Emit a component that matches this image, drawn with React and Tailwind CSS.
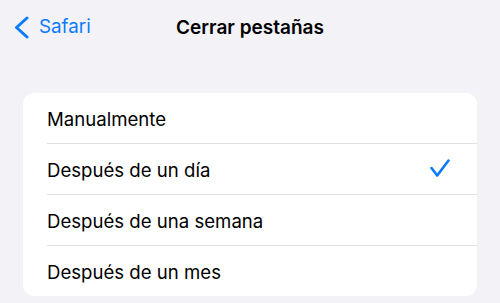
import React from "react";

const options = [
  { label: "Manualmente", checked: false },
  { label: "Después de un día", checked: true },
  { label: "Después de una semana", checked: false },
  { label: "Después de un mes", checked: false },
];

const Check = () => (
  <svg width="20" height="19" viewBox="0 0 20 19" fill="none">
    <path
      d="M1.5 9 L7.2 16.5 L18.5 1.5"
      stroke="#0a7aff"
      strokeWidth="2.6"
      strokeLinecap="round"
      strokeLinejoin="round"
    />
  </svg>
);

const App = () => {
  return (
    <div className="w-[500px] h-[303px] bg-[#f2f2f7] overflow-hidden font-['Inter',sans-serif] text-black">
      <div className="h-[54px] grid grid-cols-[1fr_auto_1fr] items-center">
        <div className="flex items-center pl-[14px] gap-[10px] text-[#0a7aff]">
          <svg width="15" height="23" viewBox="0 0 15 23" fill="none">
            <path
              d="M13 2 L2.5 11.5 L13 21"
              stroke="#0a7aff"
              strokeWidth="3"
              strokeLinecap="round"
              strokeLinejoin="round"
            />
          </svg>
          <span className="text-[18.8px] leading-none pt-[1px]">Safari</span>
        </div>
        <h1 className="text-[19px] font-semibold leading-none pt-[1px]">Cerrar pestañas</h1>
        <div />
      </div>

      <div className="mx-[23px] mt-[39px] bg-white rounded-[11px] overflow-hidden">
        {options.map((opt, i) => (
          <div key={opt.label} className="h-[50.85px] pl-[24px] flex">
            <div
              className={
                "flex-1 flex items-center justify-between pr-[27px] " +
                (i < options.length - 1 ? "border-b border-[#e0e0e4]" : "")
              }
            >
              <span className="text-[18.6px] leading-none pt-[3px]">{opt.label}</span>
              {opt.checked && <Check />}
            </div>
          </div>
        ))}
      </div>
    </div>
  );
};

export default App;
